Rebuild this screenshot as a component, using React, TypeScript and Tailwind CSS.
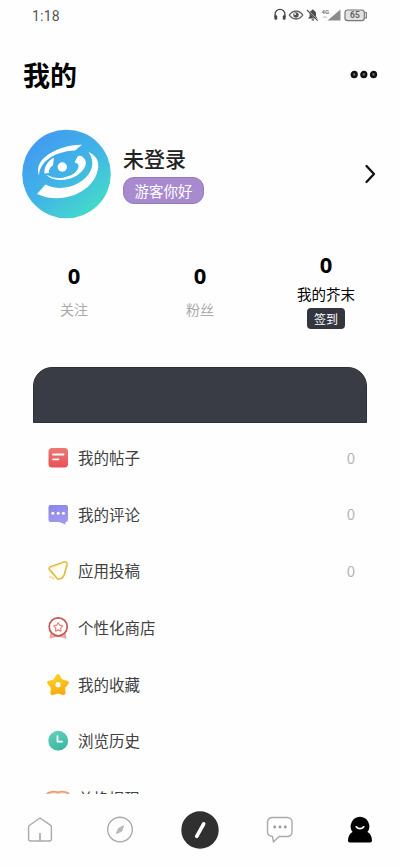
import React from 'react';

type IconProps = { children: React.ReactNode };

function RowIcon({ children }: IconProps) {
  return (
    <svg viewBox="0 0 24 24" className="h-6 w-6 shrink-0" fill="none">
      {children}
    </svg>
  );
}

function StatusIcons() {
  return (
    <svg viewBox="0 0 96 16" className="mb-0.5 h-4 w-24" fill="none">
      {/* headphones */}
      <path d="M2.6 10V7.2a4.9 4.9 0 0 1 9.8 0V10" transform="translate(-0.5 0)" stroke="#444" strokeWidth="1.3" />
      <rect x="1.4" y="8.3" width="2.8" height="4.5" rx="1" fill="#444" />
      <rect x="9.8" y="8.3" width="2.8" height="4.5" rx="1" fill="#444" />
      {/* eye */}
      <path d="M17 8c3.5-5.3 10-5.3 13.5 0-3.5 5.3-10 5.3-13.5 0Z" transform="translate(-0.7 0)" stroke="#555" strokeWidth="1.3" />
      <circle cx="23" cy="8" r="2.7" fill="#555" />
      <circle cx="22.1" cy="7" r="0.9" fill="#fff" />
      {/* muted bell */}
      <path d="M35 11.5h9.5L43 9.5V7c0-2-1-3.3-2.5-3.7V2.5h-1.4v.8C37.5 3.7 36.6 5 36.6 7v2.5ZM38.7 12.2h2.3v1.3h-2.3Z" fill="#4b4b4b" />
      <path d="m34.500 3.300 10.200 10.200" stroke="#fff" strokeWidth="1.6" />
      <path d="m34 3 10.700 10.700" stroke="#4b4b4b" strokeWidth="1.1" />
      {/* signal */}
      <text x="48.5" y="7" fontSize="6" fontWeight="700" fill="#777" fontFamily="Roboto, sans-serif">4G</text>
      <path d="M67.5 2.5v11H54.5Z" fill="#8c8c8c" />
      <path d="M50 10.5c1.5-.8 2.8-.8 4.2 0" stroke="#bbb" />
      {/* battery */}
      <rect x="72" y="3" width="19.3" height="10.6" rx="2.6" fill="#e2e2e2" stroke="#777" strokeWidth="1.2" />
      <path d="M92 5.5h1.3v5.5H92" stroke="#777" strokeWidth="1.2" />
      <text x="77" y="11.3" fontSize="8.5" fontWeight="700" fill="#666" fontFamily="Roboto, sans-serif">65</text>
    </svg>
  );
}

function Avatar() {
  return (
    <svg viewBox="0 0 90 90" className="mb-0.5 h-[90px] w-[90px] shrink-0">
      <defs>
        <linearGradient id="avatar" x1="0.2" y1="0.1" x2="0.85" y2="0.9">
          <stop offset="0" stopColor="#429cf0" />
          <stop offset="0.5" stopColor="#40b5e6" />
          <stop offset="1" stopColor="#45dbc9" />
        </linearGradient>
      </defs>
      <circle cx="44.5" cy="45" r="44.3" fill="url(#avatar)" />
      <g fill="#fff">
        <path d="M60 15.7C48 15.5 32 20 22.5 28.5 16.5 34 14.500 40 17 46.500c.3-6 2.500-10.500 8-15.500C32 25 42 22 53 21.500Z" />
        <path d="M32 28.500C25.500 32 21.800 38 22.500 44.500l4.500-.5c-.3-3 .5-5.500 4-7.500Z" />
        <path d="M55.500 27.500c1.500-1 3.500-1 5 .3 3.500 3 4.500 6.500 2 11C58.500 46 48 51.500 38 51c-6.500-.3-11-2-13.500-5.500C30 49 36 49.700 42 48.500c7-1.500 12-4.500 14-9 1.500-3.500 0-5.500-3.500-6Z" />
        <path d="M66.500 23c7 3 10.500 8.500 9.700 15.500C74.500 54 60 65.500 43 68.500c-10 1.500-19.500.5-28-3.500l8.500-9.500c10 5 22 4.500 33-1.500 12-6.500 18.500-19 10-31Z" />
        <circle cx="40.3" cy="38" r="4.7" />
      </g>
    </svg>
  );
}

const rows = [
  {
    label: '我的帖子',
    count: '0',
    icon: (
      <RowIcon>
        <rect x="2.5" y="2" width="19.5" height="19.5" rx="3.5" fill="url(#red)" />
        <path d="M7 8.5h10.5M7 13.3h5.5" stroke="#fff" strokeWidth="1.8" strokeLinecap="round" />
      </RowIcon>
    ),
  },
  {
    label: '我的评论',
    count: '0',
    icon: (
      <RowIcon>
        <path d="M4.5 2H20a2 2 0 0 1 2 2v13a2 2 0 0 1-2 2h-.5v2.5L13 19H4.5a2 2 0 0 1-2-2V4a2 2 0 0 1 2-2Z" fill="url(#violet)" />
        <g fill="#fff"><circle cx="6.8" cy="10.3" r="1.5" /><circle cx="12.2" cy="10.3" r="1.5" /><circle cx="17.4" cy="10.3" r="1.5" /></g>
      </RowIcon>
    ),
  },
  {
    label: '应用投稿',
    count: '0',
    icon: (
      <RowIcon>
        <path d="M4.5 7.8 18 3c2.2-.7 3.5.5 3 2.700L18.500 15c-1 3-3.500 5.500-7 5-2-2-4.500-6-7.800-9-1-1-.6-2.600.8-3.200Z" fill="#fffdf2" stroke="#dfbd4b" strokeWidth="1.7" />
        <path d="M3 18.5c2-1 4.5-.5 5 2" stroke="#f5dc91" strokeWidth="1.5" />
        <path d="m6 8.500 11-4" stroke="#f8e7ad" />
      </RowIcon>
    ),
  },
  {
    label: '个性化商店',
    icon: (
      <RowIcon>
        <path d="M5 17.500 4.500 21.500c4-1.300 11-1.300 15 0l-.5-4" fill="#f6c3c1" stroke="#eb9b98" strokeWidth="1.5" />
        <circle cx="12.2" cy="10.8" r="9" fill="#fff" stroke="#c95355" strokeWidth="1.7" />
        <path d="m12.200 6.700 1.500 2.500 2.900.7-1.900 2.200.2 3-2.700-1.200-2.700 1.200.2-3-1.900-2.200 2.900-.7Z" stroke="#eb817f" strokeWidth="1.2" strokeLinejoin="round" />
      </RowIcon>
    ),
  },
  {
    label: '我的收藏',
    icon: (
      <RowIcon>
        <path d="M12 3.300 15 8.300 20.800 9.700 17 14.200 17.500 20 12 18.200 6.500 20 7 14.200 3.200 9.700 9 8.300Z" fill="url(#gold)" stroke="url(#gold)" strokeWidth="4.2" strokeLinejoin="round" />
        <circle cx="12" cy="11.700" r="2.6" fill="#fff" />
      </RowIcon>
    ),
  },
  {
    label: '浏览历史',
    icon: (
      <RowIcon>
        <circle cx="12.2" cy="11.7" r="9.9" fill="url(#mint)" />
        <path d="M11.5 7.2v5.5H16" stroke="#fff" strokeWidth="1.8" strokeLinecap="round" strokeLinejoin="round" />
      </RowIcon>
    ),
  },
  {
    label: '兑换提现',
    icon: (
      <RowIcon>
        <path d="M1.5 6.300C4.500 4.500 9 4.300 12 5.300c3-1 7.500-.8 10.500 1V20h-21Z" fill="#fce3d2" stroke="#e9a074" strokeWidth="1.8" />
        <path d="M12 6.500V20" stroke="#eb9b68" />
      </RowIcon>
    ),
  },
];

function Gradients() {
  return (
    <svg className="absolute h-0 w-0">
      <defs>
        <linearGradient id="red" x2="0" y2="1"><stop stopColor="#ee7775" /><stop offset="1" stopColor="#e95158" /></linearGradient>
        <linearGradient id="violet" x2="0.4" y2="1"><stop stopColor="#8a84e8" /><stop offset="1" stopColor="#a09bed" /></linearGradient>
        <linearGradient id="gold" gradientUnits="userSpaceOnUse" x1="8" y1="2" x2="14" y2="22"><stop stopColor="#fed128" /><stop offset="1" stopColor="#f6ab10" /></linearGradient>
        <linearGradient id="mint" x2="0.4" y2="1"><stop stopColor="#64d2bf" /><stop offset="1" stopColor="#3cb9a2" /></linearGradient>
      </defs>
    </svg>
  );
}

function Stat({ label }: { label: string }) {
  return (
    <div className="flex flex-1 flex-col items-center pt-[11px]">
      <b className="-mt-px font-['Noto_Sans','Noto_Sans_CJK_SC',sans-serif] text-[22px] leading-8">0</b>
      <span className="mt-0.5 text-sm leading-8 text-[#aaa]">{label}</span>
    </div>
  );
}

export default function App() {
  return (
    <div className="relative flex h-[866px] w-[400px] flex-col overflow-hidden bg-[#fefefe] font-['Noto_Sans_CJK_SC',sans-serif] text-black">
      <Gradients />
      <div className="flex h-8 shrink-0 items-center justify-between pr-[31px] pl-8">
        <span className="font-[Roboto,sans-serif] text-[14px] tracking-[0.2px] text-[#555]">1:18</span>
        <StatusIcons />
      </div>
      <header className="flex h-[88px] shrink-0 items-center justify-between pr-[22px] pb-[3px] pl-[23px]">
        <h1 className="text-[27px] leading-10 font-bold">我的</h1>
        <svg viewBox="0 0 28 10" className="h-2.5 w-7" fill="#777" stroke="#111" strokeWidth="2.5">
          <circle cx="4.2" cy="4.500" r="2.4" /><circle cx="13.800" cy="4.500" r="2.4" /><circle cx="23.5" cy="4.500" r="2.4" />
        </svg>
      </header>
      <section className="flex h-[109px] shrink-0 items-center pr-[23px] pl-[22px]">
        <Avatar />
        <div className="mb-[3px] ml-[11px] flex flex-1 flex-col items-start">
          <h2 className="text-[21px] leading-8 font-medium text-[#222]">未登录</h2>
          <span className="mt-[3px] flex h-[27px] w-[81px] items-center justify-center rounded-[11px] border border-[#9777c3] bg-[#a88acf] text-[14.5px] text-white">游客你好</span>
        </div>
        <svg viewBox="0 0 14 20" className="mb-0.5 h-5 w-3.5" fill="none" stroke="#111" strokeWidth="2.3" strokeLinecap="round" strokeLinejoin="round"><path d="m3.500 2 7.500 8-7.500 8" /></svg>
      </section>
      <section className="flex h-[138px] shrink-0 px-[11px] pt-5">
        <Stat label="关注" />
        <Stat label="粉丝" />
        <div className="flex flex-1 flex-col items-center">
          <b className="-mt-px font-['Noto_Sans','Noto_Sans_CJK_SC',sans-serif] text-[22px] leading-8">0</b>
          <span className="mt-0.5 text-[14.5px] leading-6">我的芥末</span>
          <span className="mt-0.5 flex h-[21px] w-[38px] items-center justify-center rounded bg-[#34363f] text-xs text-white">签到</span>
        </div>
      </section>
      <div className="mx-[33px] h-14 shrink-0 rounded-t-[19px] border border-[#2e3037] bg-[#3a3c45]" />
      <ul className="mt-[7px] h-[363.5px] shrink-0 overflow-hidden pr-[45px] pl-[46px]">
        {rows.map((row) => (
          <li key={row.label} className="flex h-[56.6px] items-center last:pt-0.5">
            {row.icon}
            <span className="mb-0.5 ml-2 flex-1 text-[15.5px] leading-6 text-[#404040]">{row.label}</span>
            {row.count && <span className="mb-px text-[15px] leading-6 text-[#b5b5b5]">{row.count}</span>}
          </li>
        ))}
      </ul>
      <nav className="grid h-[72.5px] shrink-0 grid-cols-5 place-items-center">
        <svg viewBox="0 0 28 28" className="h-7 w-7" fill="none" stroke="#aaa" strokeWidth="1.4" strokeLinejoin="round"><path d="m14 2 10.400 7.200c.7.500 1 1.200 1 2V23a2 2 0 0 1-2 2H4.600a2 2 0 0 1-2-2V11.200c0-.8.3-1.500 1-2Z" /><path d="M14 17v8" strokeWidth="1.7" /></svg>
        <svg viewBox="0 0 28 28" className="h-7 w-7" fill="none" stroke="#aaa" strokeWidth="1.4"><circle cx="14" cy="13.5" r="12.3" /><path d="m17.500 9.800-1.700 5.300-5.300 2.300 2-5Z" fill="#bbb" strokeWidth="0.8" /></svg>
        <svg viewBox="0 0 38 38" className="h-[38px] w-[38px]"><circle cx="19" cy="19" r="18.7" fill="#303030" /><path d="m22.700 12.800-7 12.500" stroke="#fff" strokeWidth="3.6" strokeLinecap="round" /></svg>
        <svg viewBox="0 0 28 28" className="h-7 w-7" fill="none" stroke="#aaa" strokeWidth="1.4" strokeLinejoin="round"><path d="M6.500 1.500h15A4.500 4.500 0 0 1 26 6v10a4.500 4.500 0 0 1-4.500 4.500H13L7.500 26l-1-5.500C3.500 20 1.500 18 1.500 16V6a4.500 4.500 0 0 1 5-4.500Z" /><g fill="#999" stroke="none"><circle cx="8.7" cy="11" r="1.4" /><circle cx="14" cy="11" r="1.4" /><circle cx="19.3" cy="11" r="1.4" /></g></svg>
        <svg viewBox="0 0 28 28" className="h-7 w-7"><path d="M14 .8A9.500 9.500 0 0 0 6.600 16C3.800 17.300 2 20.500 2 24.500c0 1.300.6 2 2 2h20c1.400 0 2-.7 2-2 0-4-1.800-7.200-4.600-8.500A9.500 9.500 0 0 0 14 .8Z" fill="#000" /><path d="M10.300 10.800c1.800 2.500 5.600 2.500 7.400 0" fill="none" stroke="#fff" strokeWidth="1.7" strokeLinecap="round" /></svg>
      </nav>
    </div>
  );
}
